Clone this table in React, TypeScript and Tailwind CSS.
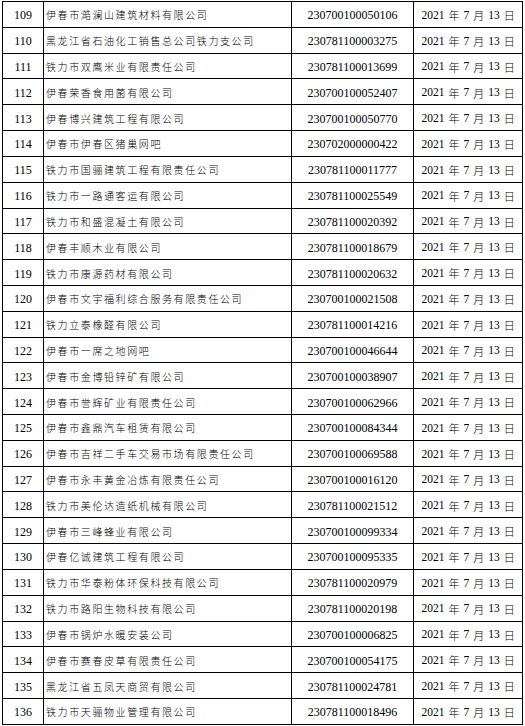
import React from 'react';

type Row = [number, string, string];

const rows: Row[] = [
  [109, '伊春市澔澜山建筑材料有限公司', '230700100050106'],
  [110, '黑龙江省石油化工销售总公司铁力支公司', '230781100003275'],
  [111, '铁力市双鹰米业有限责任公司', '230781100013699'],
  [112, '伊春荣香食用菌有限公司', '230700100052407'],
  [113, '伊春博兴建筑工程有限公司', '230700100050770'],
  [114, '伊春市伊春区猪巢网吧', '230702000000422'],
  [115, '铁力市国骊建筑工程有限责任公司', '230781100011777'],
  [116, '铁力市一路通客运有限公司', '230781100025549'],
  [117, '铁力市和盛混凝土有限公司', '230781100020392'],
  [118, '伊春丰顺木业有限公司', '230781100018679'],
  [119, '铁力市康源药材有限公司', '230781100020632'],
  [120, '伊春市文宇福利综合服务有限责任公司', '230700100021508'],
  [121, '铁力立泰橡醛有限公司', '230781100014216'],
  [122, '伊春市一席之地网吧', '230700100046644'],
  [123, '伊春市金博铅锌矿有限公司', '230700100038907'],
  [124, '伊春市誉辉矿业有限责任公司', '230700100062966'],
  [125, '伊春市鑫鼎汽车租赁有限公司', '230700100084344'],
  [126, '伊春市吉祥二手车交易市场有限责任公司', '230700100069588'],
  [127, '伊春市永丰黄金冶炼有限责任公司', '230700100016120'],
  [128, '铁力市美伦达造纸机械有限公司', '230781100021512'],
  [129, '伊春市三峰蜂业有限公司', '230700100099334'],
  [130, '伊春亿诚建筑工程有限公司', '230700100095335'],
  [131, '铁力市华泰粉体环保科技有限公司', '230781100020979'],
  [132, '铁力市路阳生物科技有限公司', '230781100020198'],
  [133, '伊春市锅炉水暖安装公司', '230700100006825'],
  [134, '伊春市赛春皮草有限责任公司', '230700100054175'],
  [135, '黑龙江省五凤天商贸有限公司', '230781100024781'],
  [136, '铁力市天骊物业管理有限公司', '230781100018496'],
];

const serif = "font-['Liberation_Serif','Noto_Sans_CJK_SC',serif]";
const cjk = "font-['Noto_Sans_CJK_SC',sans-serif] font-light";

export default function App() {
  return (
    <div className="w-[525px] h-[726px] bg-white overflow-hidden pt-[1px] pl-[2px]">
      <div className="w-[521px] border-l border-t border-black grid grid-cols-[41px_248px_122px_109px] auto-rows-[25.82px] text-black">
        {rows.map(([no, name, code]) => (
          <React.Fragment key={no}>
            <div className={`border-r border-b border-black flex items-center justify-center pt-[2px] text-[12px] ${serif}`}>
              {no}
            </div>
            <div className={`border-r border-b border-black flex items-center pl-[2px] pt-[1px] text-[10px] tracking-[1.6px] whitespace-nowrap ${cjk}`}>
              {name}
            </div>
            <div className={`border-r border-b border-black flex items-center justify-center pt-[2px] text-[12px] ${serif}`}>
              {code}
            </div>
            <div className={`border-r border-b border-black flex items-center justify-center gap-[4px] pt-[2px] text-[11.5px] ${serif}`}>
              <span>2021</span>
              <span className={`${cjk} text-[11px]`}>年</span>
              <span>7</span>
              <span className={`${cjk} text-[11px]`}>月</span>
              <span>13</span>
              <span className={`${cjk} text-[11px]`}>日</span>
            </div>
          </React.Fragment>
        ))}
      </div>
    </div>
  );
}
